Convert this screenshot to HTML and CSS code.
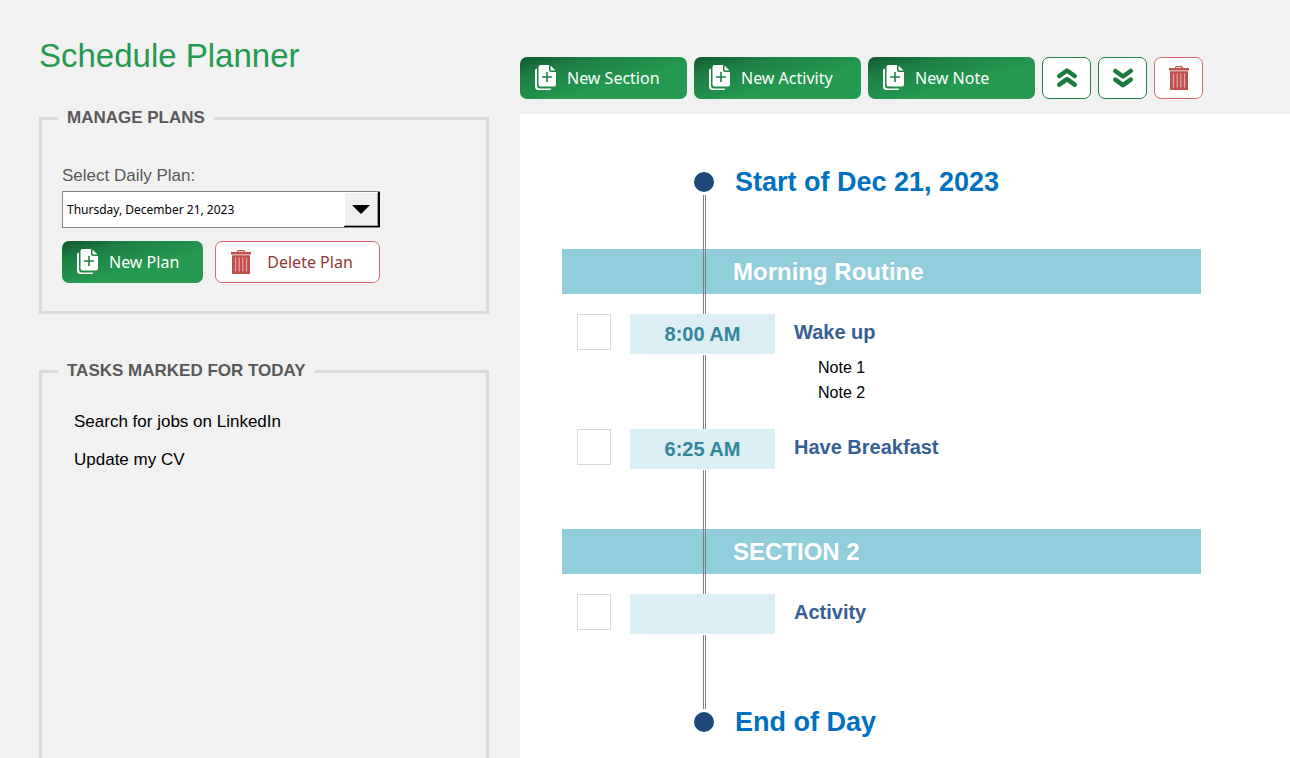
FILE: index.html
```html
<!DOCTYPE html>
<html lang="en">
<head>
  <meta charset="UTF-8" />
  <meta name="viewport" content="width=device-width, initial-scale=1" />
  <title>Schedule Planner</title>
  <link rel="stylesheet" href="styles.css">
</head>
<body>
  <!-- Shared icons -->
  <svg class="icon-defs" aria-hidden="true">
    <symbol id="icon-new" viewBox="0 0 22 26">
      <path fill="currentColor" d="M2 3.500v17a3 3 0 0 0 3 3h11.500a2.500 2.500 0 0 1-2.500 1.500H3.500A3.500 3.500 0 0 1 0 21.500V5.500a2 2 0 0 1 2-2z" />
      <path fill="currentColor" d="M5.500 0H14v5a2 2 0 0 0 2 2h5v12.500a2 2 0 0 1-2 2H5.500a2 2 0 0 1-2-2V2a2 2 0 0 1 2-2z" />
      <path fill="currentColor" d="M15.500.500 20.500 5.500H16.500a1 1 0 0 1-1-1z" />
      <path stroke="#1e8045" stroke-width="1.600" d="M12 7v10M7 12h10" />
    </symbol>
    <symbol id="icon-trash" viewBox="0 0 20 24">
      <path fill="none" stroke="#c0504d" stroke-width="1.200" d="M6.500 2.500V1.600a1 1 0 0 1 1-1h5a1 1 0 0 1 1 1v.900" />
      <path fill="#c0504d" d="M0 2h20v2.500H0zM1 5.200h18V24H1z" />
      <path stroke="#e3a9a7" stroke-width="1.200" d="M4.500 7.500v14M8.200 7.500v14M11.800 7.500v14M15.500 7.500v14" />
    </symbol>
    <symbol id="icon-up" viewBox="0 0 22 22">
      <path fill="none" stroke="currentColor" stroke-width="4.600" stroke-linecap="round" stroke-linejoin="round" d="M3.300 9 11 3.500 18.700 9M3.300 17.700 11 12.200l7.700 5.500" />
    </symbol>
    <symbol id="icon-down" viewBox="0 0 22 22">
      <path fill="none" stroke="currentColor" stroke-width="4.600" stroke-linecap="round" stroke-linejoin="round" d="M3.300 4 11 9.500 18.700 4M3.300 12.700l7.700 5.500 7.700-5.500" />
    </symbol>
  </svg>

  <div class="container">
    <!-- Left: plans and tasks -->
    <aside class="sidebar">
      <h1>Schedule Planner</h1>

      <fieldset class="panel plans">
        <legend>MANAGE PLANS</legend>
        <div class="plan-form">
          <label for="planSelect">Select Daily Plan:</label>
          <div class="select-wrap">
            <select id="planSelect">
              <option>Thursday, December 21, 2023</option>
            </select>
            <span class="select-arrow"></span>
          </div>
          <div class="plan-buttons">
            <button type="button" class="btn btn-green"><svg class="icon-new"><use href="#icon-new" /></svg>New Plan</button>
            <button type="button" class="btn btn-red"><svg class="icon-trash"><use href="#icon-trash" /></svg>Delete Plan</button>
          </div>
        </div>
      </fieldset>

      <fieldset class="panel tasks">
        <legend>TASKS MARKED FOR TODAY</legend>
        <ul>
          <li>Search for jobs on LinkedIn</li>
          <li>Update my CV</li>
        </ul>
      </fieldset>
    </aside>

    <!-- Right: schedule -->
    <main class="schedule">
      <div class="toolbar">
        <button type="button" class="btn btn-green btn-wide"><svg class="icon-new"><use href="#icon-new" /></svg>New Section</button>
        <button type="button" class="btn btn-green btn-wide"><svg class="icon-new"><use href="#icon-new" /></svg>New Activity</button>
        <button type="button" class="btn btn-green btn-wide"><svg class="icon-new"><use href="#icon-new" /></svg>New Note</button>
        <button type="button" class="btn btn-icon" aria-label="Move up"><svg class="icon-move"><use href="#icon-up" /></svg></button>
        <button type="button" class="btn btn-icon" aria-label="Move down"><svg class="icon-move"><use href="#icon-down" /></svg></button>
        <button type="button" class="btn btn-icon btn-remove" aria-label="Delete"><svg class="icon-trash"><use href="#icon-trash" /></svg></button>
      </div>

      <div class="sheet">
        <div class="timeline">
          <h2 class="milestone">Start of Dec 21, 2023</h2>

          <div class="sections">
            <section>
              <h3>Morning Routine</h3>
              <div class="activity">
                <input type="checkbox" id="wakeUp" />
                <time>8:00 AM</time>
                <div class="details">
                  <label for="wakeUp">Wake up</label>
                  <ul class="notes">
                    <li>Note 1</li>
                    <li>Note 2</li>
                  </ul>
                </div>
              </div>
              <div class="activity">
                <input type="checkbox" id="breakfast" />
                <time>6:25 AM</time>
                <div class="details">
                  <label for="breakfast">Have Breakfast</label>
                </div>
              </div>
            </section>

            <section>
              <h3>SECTION 2</h3>
              <div class="activity">
                <input type="checkbox" id="activity" />
                <time></time>
                <div class="details">
                  <label for="activity">Activity</label>
                </div>
              </div>
            </section>
          </div>

          <h2 class="milestone">End of Day</h2>
        </div>
      </div>
    </main>
  </div>
</body>
</html>
```
FILE: styles.css
```css
* {
  box-sizing: border-box;
}
body {
  font-family: "Liberation Sans", Arial, sans-serif;
  font-size: 16px;
  background-color: #f1f1f1;
  color: #000;
  margin: 0;
}
h1, h2, h3, ul {
  margin: 0;
  padding: 0;
}
ul {
  list-style: none;
}
.icon-defs {
  display: none;
}
.container {
  display: flex;
  min-height: 100vh;
}

/* sidebar */
.sidebar {
  display: flex;
  flex-direction: column;
  flex: 0 0 520px;
  padding: 36px 31px 0 39px;
}
h1 {
  color: #24994f;
  font-size: 33px;
  font-weight: normal;
  line-height: 40px;
}
.panel {
  border: 3px solid #d9d9d9;
  margin: 0;
  min-width: 0;
}
legend {
  padding: 0 9px;
  color: #595959;
  font-size: 17px;
  font-weight: bold;
  line-height: 20px;
}
.plans {
  margin-top: 32px;
  padding: 36px 16px 28px;
}
.plan-form {
  padding-left: 4px;
}
.plan-form label {
  display: block;
  color: #595959;
  font-size: 17px;
  line-height: 24px;
}
.select-wrap {
  display: grid;
  width: 318px;
  margin-top: 3px;
}
.select-wrap select,
.select-arrow {
  grid-area: 1 / 1;
}
select {
  appearance: none;
  height: 37px;
  padding: 0 40px 0 4px;
  border: 1px solid #7f848e;
  border-radius: 0;
  background-color: #fff;
  color: #000;
  font-family: "Noto Sans", sans-serif;
  font-size: 12px;
}
.select-arrow {
  display: flex;
  align-items: center;
  justify-content: center;
  align-self: center;
  justify-self: end;
  width: 36px;
  height: 35px;
  border-right: 2px solid #000;
  border-bottom: 1px solid #000;
  background-color: #f0f0f0;
  box-shadow: inset 1px 1px 0 #fff, inset -1px -1px 0 #a0a0a0;
  pointer-events: none;
}
.select-arrow::before {
  content: "";
  border: 9px solid transparent;
  border-top-color: #000;
  border-bottom: 0;
}
.plan-buttons {
  display: flex;
  gap: 12px;
  margin-top: 13px;
}
.tasks {
  flex: 1;
  margin-top: 47px;
  padding: 22px 16px;
  border-bottom: 0;
}
.tasks ul {
  padding-left: 16px;
}
.tasks li {
  font-size: 17px;
  line-height: 38px;
}

/* buttons */
.btn {
  display: flex;
  align-items: center;
  gap: 10px;
  height: 42px;
  padding: 0 24px 0 15px;
  border: 0;
  border-radius: 7px;
  font-family: "Noto Sans", sans-serif;
  font-size: 16px;
  white-space: nowrap;
  cursor: pointer;
}
.btn-green {
  background: linear-gradient(165deg, #14592f 0%, #1e8045 25%, #24994f 60%);
  color: #fff;
}
.btn-wide {
  min-width: 167px;
}
.btn-red,
.btn-icon {
  border: 1px solid #d06b69;
  background-color: #fff;
  color: #953735;
}
.btn-red {
  gap: 16px;
  padding-right: 26px;
}
.btn-icon {
  justify-content: center;
  width: 49px;
  padding: 0;
  border-color: #1e8045;
  color: #1b7a3e;
}
.btn-remove {
  border-color: #d06b69;
}
.icon-new {
  width: 22px;
  height: 26px;
}
.icon-trash {
  width: 20px;
  height: 24px;
}
.icon-move {
  width: 22px;
  height: 22px;
}

/* schedule */
.schedule {
  display: flex;
  flex-direction: column;
  flex: 1;
}
.toolbar {
  display: flex;
  gap: 7px;
  padding: 57px 0 15px;
}
.sheet {
  flex: 1;
  padding: 40px 89px 0 42px;
  background-color: #fff;
}
.timeline {
  position: relative;
}
/* double line running through the whole day */
.timeline::before {
  content: "";
  position: absolute;
  top: 28px;
  bottom: 28px;
  left: 141px;
  border-left: 3px double #7f7f7f;
}
.milestone {
  display: flex;
  align-items: center;
  gap: 21px;
  height: 56px;
  padding-left: 132px;
  color: #0070c0;
  font-size: 27px;
}
.milestone::before {
  content: "";
  width: 20px;
  height: 20px;
  border-radius: 50%;
  background-color: #1f497d;
  box-shadow: 0 0 0 3px #fff;
  z-index: 1;
}
.sections {
  margin-top: 39px;
}
section {
  padding-bottom: 60px;
}
h3 {
  padding-left: 171px;
  background-color: #92cddc;
  color: #fff;
  font-size: 24px;
  line-height: 45px;
}
.activity {
  display: grid;
  grid-template-columns: 34px 145px 1fr;
  column-gap: 19px;
  align-items: start;
  padding-left: 15px;
  margin-top: 20px;
}
.activity + .activity {
  margin-top: 24px;
}
.activity input {
  appearance: none;
  width: 34px;
  height: 36px;
  margin: 0;
  border: 1px solid #d9d9d9;
  background-color: #fff;
}
.activity input:checked {
  background-color: #92cddc;
}
time {
  height: 40px;
  background-color: #daeef3;
  box-shadow: 0 1px 0 #fff;
  color: #31869b;
  font-size: 20px;
  font-weight: bold;
  line-height: 40px;
  text-align: center;
  z-index: 1;
}
.details label {
  display: block;
  color: #366092;
  font-size: 20px;
  font-weight: bold;
  line-height: 36px;
}
.notes {
  margin-top: 5px;
  padding-left: 24px;
  line-height: 25px;
}
```
